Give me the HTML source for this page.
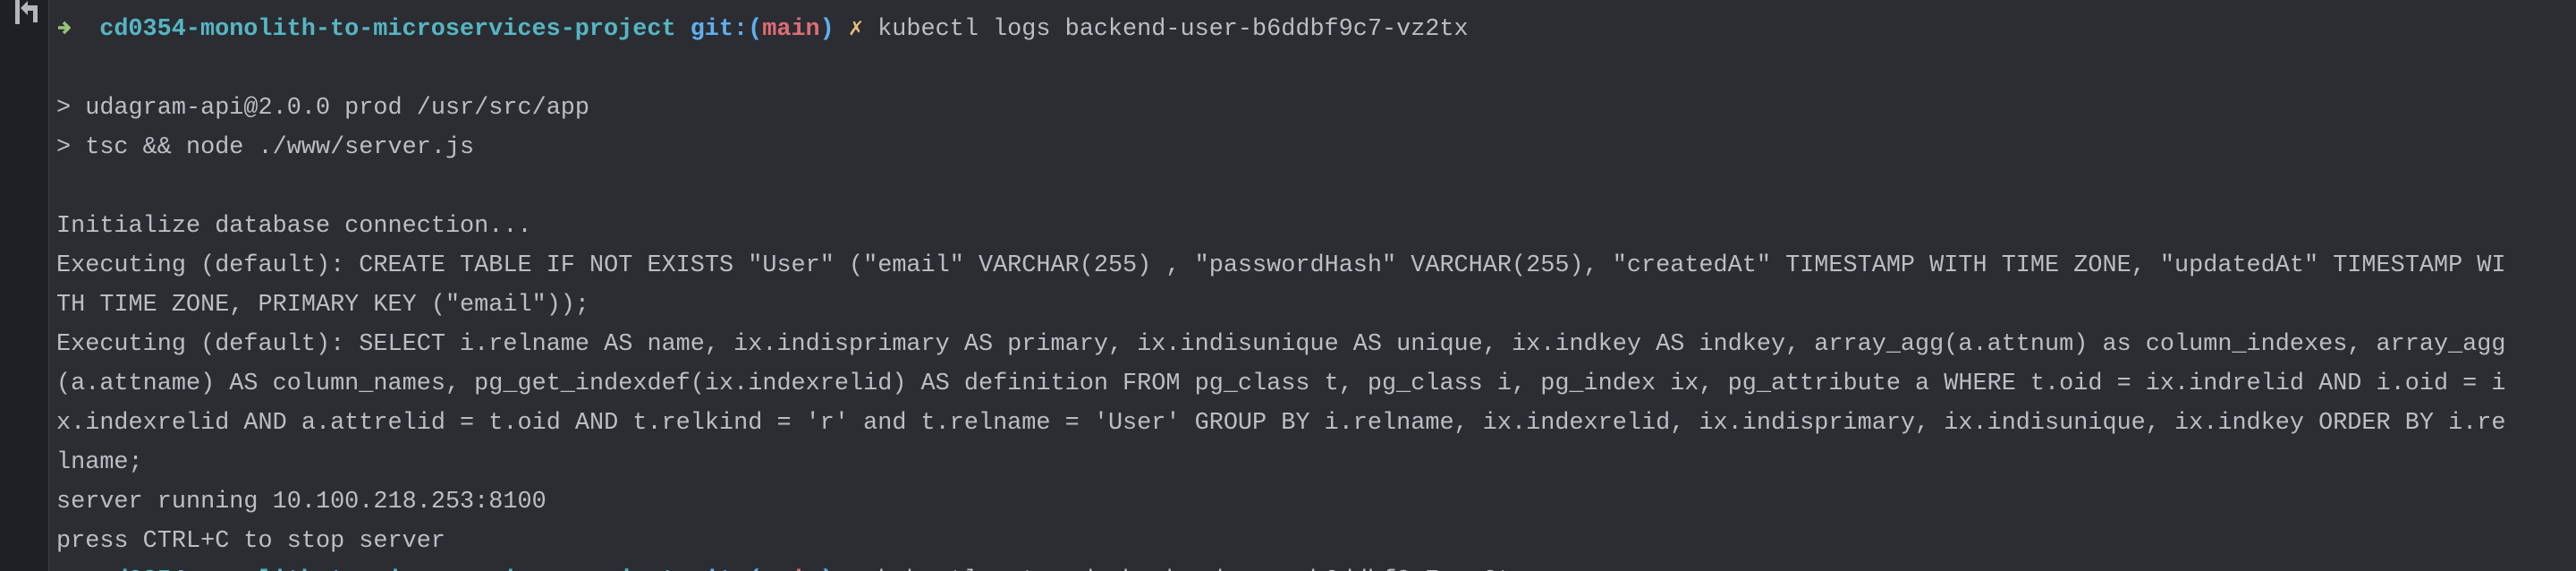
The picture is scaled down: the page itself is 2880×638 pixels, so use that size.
<!DOCTYPE html>
<html style="height:638px;overflow:hidden"><head><meta charset="utf-8"><style>
html,body{margin:0;padding:0;}
body{width:2880px;height:638px;overflow:hidden;background:#2b2d33;position:relative;font-family:"Liberation Mono","DejaVu Sans Mono",monospace;}
#gut{position:absolute;left:0;top:0;width:54px;height:638px;background:#1f2024;border-right:1px solid #383a40;}
#txt{position:absolute;left:63px;top:11px;font-size:26.85px;line-height:44px;color:#bcbec4;white-space:pre;}
.l{height:44px;}
.c{color:#56b6c2;font-weight:bold}.b{color:#61afef;font-weight:bold}.r{color:#e06c75;font-weight:bold}.y{color:#e5c07b;font-weight:bold}
</style></head><body>
<div id="gut"><svg width="54" height="30" style="position:absolute;left:0;top:0"><rect x="17" y="0" width="5" height="27" fill="#b4b6bc"/><path d="M23 9 L31 1 L31 6 L42 6 L42 25 L37 25 L37 12 L31 12 L31 17 Z" fill="#b4b6bc"/></svg></div>
<div id="txt"><div class="l"><svg width="16" height="20" style="vertical-align:-2px"><path d="M2 10 H13 M8 4 L14 10 L8 16" stroke="#98c379" stroke-width="3.5" fill="none"/></svg>  <span class="c">cd0354-monolith-to-microservices-project</span> <span class="b">git:(</span><span class="r">main</span><span class="b">)</span> <span class="y">✗</span> kubectl logs backend-user-b6ddbf9c7-vz2tx</div><div class="l"></div><div class="l">&gt; udagram-api@2.0.0 prod /usr/src/app</div><div class="l">&gt; tsc &amp;&amp; node ./www/server.js</div><div class="l"></div><div class="l">Initialize database connection...</div><div class="l">Executing (default): CREATE TABLE IF NOT EXISTS "User" ("email" VARCHAR(255) , "passwordHash" VARCHAR(255), "createdAt" TIMESTAMP WITH TIME ZONE, "updatedAt" TIMESTAMP WI</div><div class="l">TH TIME ZONE, PRIMARY KEY ("email"));</div><div class="l">Executing (default): SELECT i.relname AS name, ix.indisprimary AS primary, ix.indisunique AS unique, ix.indkey AS indkey, array_agg(a.attnum) as column_indexes, array_agg</div><div class="l">(a.attname) AS column_names, pg_get_indexdef(ix.indexrelid) AS definition FROM pg_class t, pg_class i, pg_index ix, pg_attribute a WHERE t.oid = ix.indrelid AND i.oid = i</div><div class="l">x.indexrelid AND a.attrelid = t.oid AND t.relkind = 'r' and t.relname = 'User' GROUP BY i.relname, ix.indexrelid, ix.indisprimary, ix.indisunique, ix.indkey ORDER BY i.re</div><div class="l">lname;</div><div class="l">server running 10.100.218.253:8100</div><div class="l">press CTRL+C to stop server</div><div class="l"><svg width="16" height="20" style="vertical-align:-2px"><path d="M2 10 H13 M8 4 L14 10 L8 16" stroke="#98c379" stroke-width="3.5" fill="none"/></svg>  <span class="c">cd0354-monolith-to-microservices-project</span> <span class="b">git:(</span><span class="r">main</span><span class="b">)</span> <span class="y">✗</span> kubectl get pods backend-user-b6ddbf9c7-vz2tx</div></div>
</body></html>
